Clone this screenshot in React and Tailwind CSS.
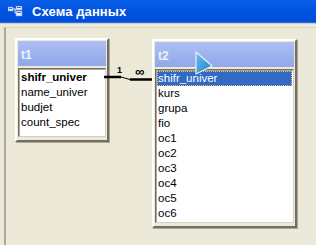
import React from 'react'

const font = { fontFamily: '"Liberation Sans", Arial, sans-serif' }

function TableBox({ name, fields, left, top, width, height, selected, boldFirst }) {
  return (
    <div
      className="absolute flex flex-col bg-[#ece9d8] border-2 border-t-white border-l-white border-r-[#716f64] border-b-[#716f64] p-px pb-[3px] gap-[2px] shadow-[1px_1px_0_#aca899]"
      style={{ left, top, width, height }}
    >
      <div className="h-[25px] shrink-0 bg-gradient-to-b from-[#aebff2] to-[#8fa8ea] flex items-center px-[3px] pt-[2px]">
        <span className="text-[12px] font-bold text-[#eef2fd] leading-none">{name}</span>
      </div>
      <div className="flex-1 bg-white border border-t-[#716f64] border-l-[#716f64] border-r-[#d4d0c8] border-b-[#d4d0c8] shadow-[inset_1px_1px_0_#aca899] pt-[1px] px-px">
        {fields.map((f, i) => (
          <div
            key={f}
            className={
              'h-[15px] flex items-center pl-px pt-px text-[11.5px] leading-none ' +
              (selected === i
                ? 'bg-[#316ac5] text-white outline outline-1 outline-dotted outline-[#f0c060] -outline-offset-1'
                : 'text-black') +
              (boldFirst && i === 0 ? ' font-bold' : '')
            }
          >
            {f}
          </div>
        ))}
      </div>
    </div>
  )
}

export default function App() {
  return (
    <div className="w-[316px] h-[245px] overflow-hidden bg-[#ece9d8] flex flex-col" style={font}>
      <div className="h-[22px] shrink-0 bg-gradient-to-b from-[#0a5fe8] via-[#0053e0] to-[#0050d8] flex items-center pl-[8px] gap-[9px]">
        <svg width="15" height="11" viewBox="0 0 15 11">
          <rect x="0" y="1" width="5" height="4" fill="#e8eefc" stroke="#6d9ae8" strokeWidth="0.5" />
          <rect x="8" y="0" width="6" height="4" fill="#e8eefc" stroke="#6d9ae8" strokeWidth="0.5" />
          <rect x="8" y="5" width="6" height="5" fill="#e8eefc" stroke="#6d9ae8" strokeWidth="0.5" />
          <rect x="1" y="2" width="3" height="1" fill="#3a70d8" />
          <rect x="9" y="1" width="4" height="1" fill="#3a70d8" />
          <rect x="9" y="6" width="4" height="1" fill="#3a70d8" />
          <path d="M5 3 H8 M7 3 V7 H8" stroke="#dfe8fb" strokeWidth="1" fill="none" />
        </svg>
        <span className="text-[13px] font-bold text-white leading-none tracking-[0.1px]">Схема данных</span>
      </div>
      <div className="h-px shrink-0 bg-[#3a66c0]" />
      <div className="h-px shrink-0 bg-[#b9d0f2]" />
      <div className="flex-1 flex pt-[3px] pl-[4px]">
        <div className="flex-1 relative border-l-2 border-t border-l-[#aca899] border-t-[#d8d4c4]">
          <TableBox
            name="t1"
            fields={['shifr_univer', 'name_univer', 'budjet', 'count_spec']}
            left={9}
            top={10}
            width={94}
            height={104}
            boldFirst
          />
          <svg className="absolute" style={{ left: 98, top: 35 }} width="52" height="20" viewBox="0 0 52 20">
            <text x="13" y="10" fontSize="9" fontWeight="bold" fill="#000" fontFamily="Liberation Sans, Arial, sans-serif">1</text>
            <text x="31" y="13" fontSize="13" fontWeight="bold" fill="#000" fontFamily="Liberation Sans, Arial, sans-serif">∞</text>
            <path d="M0 14 H17" stroke="#000" strokeWidth="2.5" />
            <path d="M17 14 L26 16.5" stroke="#000" strokeWidth="1" />
            <path d="M26 16.5 H50" stroke="#000" strokeWidth="2.5" />
          </svg>
          <TableBox
            name="t2"
            fields={['shifr_univer', 'kurs', 'grupa', 'fio', 'oc1', 'oc2', 'oc3', 'oc4', 'oc5', 'oc6']}
            left={146}
            top={11}
            width={145}
            height={189}
            selected={0}
          />
          <svg className="absolute" style={{ left: 188, top: 23 }} width="20" height="25" viewBox="0 0 20 25">
            <defs>
              <linearGradient id="cur" x1="0" y1="0" x2="1" y2="1">
                <stop offset="0" stopColor="#6fc0f0" />
                <stop offset="1" stopColor="#1e78c8" />
              </linearGradient>
            </defs>
            <path d="M2 1 L18 15 L2 23 Z" fill="url(#cur)" stroke="#dff1fc" strokeWidth="1.2" strokeLinejoin="round" />
          </svg>
        </div>
      </div>
    </div>
  )
}
